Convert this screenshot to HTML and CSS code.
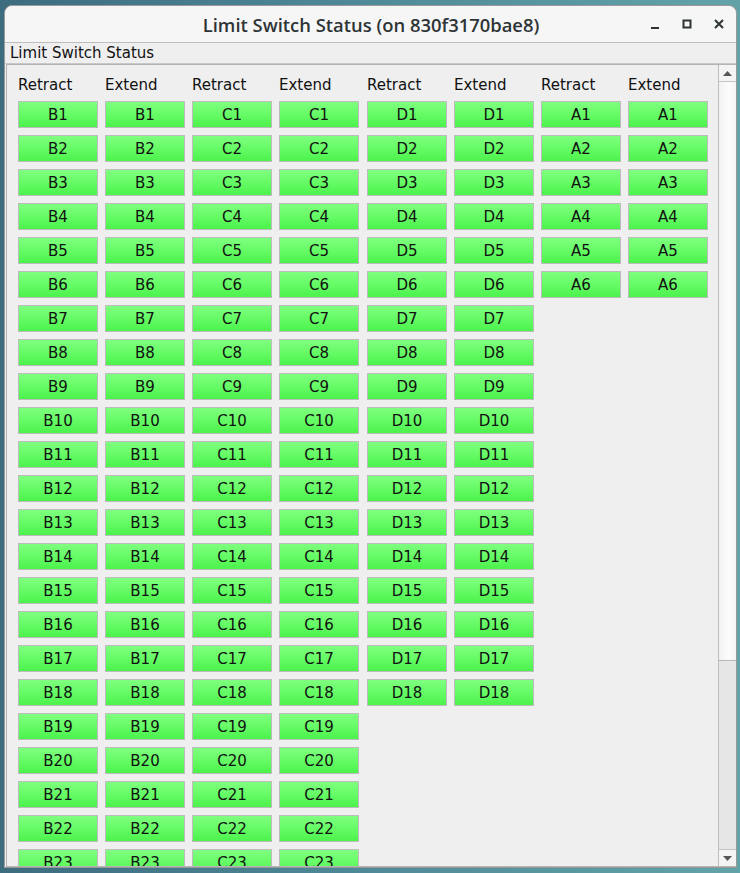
FILE: index.html
```html
<!DOCTYPE html>
<html>
<head>
<meta charset="utf-8">
<link rel="stylesheet" href="styles.css">
</head>
<body>
<div class="window">
  <div class="titlebar">
    <div class="title">Limit Switch Status (on 830f3170bae8)</div>
    <div class="controls">
      <svg class="ctl" width="14" height="14" viewBox="0 0 14 14"><rect x="3" y="10" width="8" height="2" fill="#2e3436"/></svg>
      <svg class="ctl" width="14" height="14" viewBox="0 0 14 14"><rect x="3.5" y="3.5" width="7" height="7" fill="none" stroke="#2e3436" stroke-width="2"/></svg>
      <svg class="ctl" width="14" height="14" viewBox="0 0 14 14"><path d="M3 3 L11 11 M11 3 L3 11" stroke="#2e3436" stroke-width="2"/></svg>
    </div>
  </div>
  <div class="label">Limit Switch Status</div>
  <div class="scrollarea">
    <div class="viewport">
      <div class="cols">
        <div class="col">
          <div class="hdr">Retract</div>
          <div class="btn">B1</div><div class="btn">B2</div><div class="btn">B3</div><div class="btn">B4</div><div class="btn">B5</div><div class="btn">B6</div><div class="btn">B7</div><div class="btn">B8</div><div class="btn">B9</div><div class="btn">B10</div><div class="btn">B11</div><div class="btn">B12</div><div class="btn">B13</div><div class="btn">B14</div><div class="btn">B15</div><div class="btn">B16</div><div class="btn">B17</div><div class="btn">B18</div><div class="btn">B19</div><div class="btn">B20</div><div class="btn">B21</div><div class="btn">B22</div><div class="btn">B23</div>
        </div>
        <div class="col">
          <div class="hdr">Extend</div>
          <div class="btn">B1</div><div class="btn">B2</div><div class="btn">B3</div><div class="btn">B4</div><div class="btn">B5</div><div class="btn">B6</div><div class="btn">B7</div><div class="btn">B8</div><div class="btn">B9</div><div class="btn">B10</div><div class="btn">B11</div><div class="btn">B12</div><div class="btn">B13</div><div class="btn">B14</div><div class="btn">B15</div><div class="btn">B16</div><div class="btn">B17</div><div class="btn">B18</div><div class="btn">B19</div><div class="btn">B20</div><div class="btn">B21</div><div class="btn">B22</div><div class="btn">B23</div>
        </div>
        <div class="col">
          <div class="hdr">Retract</div>
          <div class="btn">C1</div><div class="btn">C2</div><div class="btn">C3</div><div class="btn">C4</div><div class="btn">C5</div><div class="btn">C6</div><div class="btn">C7</div><div class="btn">C8</div><div class="btn">C9</div><div class="btn">C10</div><div class="btn">C11</div><div class="btn">C12</div><div class="btn">C13</div><div class="btn">C14</div><div class="btn">C15</div><div class="btn">C16</div><div class="btn">C17</div><div class="btn">C18</div><div class="btn">C19</div><div class="btn">C20</div><div class="btn">C21</div><div class="btn">C22</div><div class="btn">C23</div>
        </div>
        <div class="col wide">
          <div class="hdr">Extend</div>
          <div class="btn">C1</div><div class="btn">C2</div><div class="btn">C3</div><div class="btn">C4</div><div class="btn">C5</div><div class="btn">C6</div><div class="btn">C7</div><div class="btn">C8</div><div class="btn">C9</div><div class="btn">C10</div><div class="btn">C11</div><div class="btn">C12</div><div class="btn">C13</div><div class="btn">C14</div><div class="btn">C15</div><div class="btn">C16</div><div class="btn">C17</div><div class="btn">C18</div><div class="btn">C19</div><div class="btn">C20</div><div class="btn">C21</div><div class="btn">C22</div><div class="btn">C23</div>
        </div>
        <div class="col">
          <div class="hdr">Retract</div>
          <div class="btn">D1</div><div class="btn">D2</div><div class="btn">D3</div><div class="btn">D4</div><div class="btn">D5</div><div class="btn">D6</div><div class="btn">D7</div><div class="btn">D8</div><div class="btn">D9</div><div class="btn">D10</div><div class="btn">D11</div><div class="btn">D12</div><div class="btn">D13</div><div class="btn">D14</div><div class="btn">D15</div><div class="btn">D16</div><div class="btn">D17</div><div class="btn">D18</div>
        </div>
        <div class="col">
          <div class="hdr">Extend</div>
          <div class="btn">D1</div><div class="btn">D2</div><div class="btn">D3</div><div class="btn">D4</div><div class="btn">D5</div><div class="btn">D6</div><div class="btn">D7</div><div class="btn">D8</div><div class="btn">D9</div><div class="btn">D10</div><div class="btn">D11</div><div class="btn">D12</div><div class="btn">D13</div><div class="btn">D14</div><div class="btn">D15</div><div class="btn">D16</div><div class="btn">D17</div><div class="btn">D18</div>
        </div>
        <div class="col">
          <div class="hdr">Retract</div>
          <div class="btn">A1</div><div class="btn">A2</div><div class="btn">A3</div><div class="btn">A4</div><div class="btn">A5</div><div class="btn">A6</div>
        </div>
        <div class="col">
          <div class="hdr">Extend</div>
          <div class="btn">A1</div><div class="btn">A2</div><div class="btn">A3</div><div class="btn">A4</div><div class="btn">A5</div><div class="btn">A6</div>
        </div>
      </div>
    </div>
    <div class="scrollbar">
      <div class="arrow up"><svg width="9" height="5" viewBox="0 0 9 5"><path d="M0 5 L4.5 0 L9 5 Z" fill="#555"/></svg></div>
      <div class="thumb"></div>
      <div class="track"></div>
      <div class="arrow down"><svg width="9" height="5" viewBox="0 0 9 5"><path d="M0 0 L9 0 L4.5 5 Z" fill="#555"/></svg></div>
    </div>
  </div>
</div>
</body>
</html>
```

FILE: styles.css
```css
html, body {
  margin: 0;
  padding: 0;
}
body {
  width: 740px;
  height: 873px;
  overflow: hidden;
  background: linear-gradient(to right, #3d6c7e 0%, #4f8a98 50%, #62a3a8 100%);
  padding: 5px 3px 5px 4px;
  box-sizing: border-box;
  font-family: "DejaVu Sans", sans-serif;
}
.window {
  width: 733px;
  height: 863px;
  box-sizing: border-box;
  border: 1px solid #9a9a9a;
  border-radius: 8px 8px 0 0;
  background: #efefef;
  display: flex;
  flex-direction: column;
  overflow: hidden;
}
.titlebar {
  height: 37px;
  flex: none;
  background: #f6f6f6;
  border-bottom: 1px solid #bdbdbd;
  box-sizing: border-box;
  position: relative;
  display: flex;
  align-items: center;
  justify-content: center;
  border-radius: 7px 7px 0 0;
}
.title {
  font-family: "Open Sans", sans-serif;
  font-weight: 600;
  font-size: 18.4px;
  color: #2e3436;
  margin-left: 1px;
  margin-top: 1px;
}
.controls {
  position: absolute;
  right: 10px;
  top: 11px;
  display: flex;
  gap: 18px;
}
.ctl {
  display: block;
}
.label {
  height: 21px;
  flex: none;
  font-size: 15px;
  line-height: 21px;
  color: #111;
  padding-left: 5px;
  border-bottom: 1px solid #c8c8c8;
  box-sizing: border-box;
}
.scrollarea {
  flex: 1;
  margin-left: 1px;
  border: 1px solid #b4b4b4;
  border-right: none;
  display: flex;
  overflow: hidden;
  background: #efefef;
}
.viewport {
  flex: 1;
  overflow: hidden;
  padding: 11px 0 0 11px;
}
.cols {
  display: flex;
  gap: 7px;
  align-items: flex-start;
}
.col {
  display: flex;
  flex-direction: column;
  gap: 7px;
  width: 80px;
}
.col.wide {
  width: 81px;
}
.hdr {
  font-size: 15px;
  line-height: 18px;
  height: 18px;
  color: #111;
  white-space: nowrap;
}
.btn {
  width: 80px;
  height: 27px;
  box-sizing: border-box;
  border: 1px solid #bcbcbc;
  background: linear-gradient(to bottom, #80ff80 0%, #66fb66 50%, #4cf24c 100%);
  font-size: 15px;
  line-height: 27px;
  text-align: center;
  color: #111;
  flex: none;
}
.scrollbar {
  width: 17px;
  flex: none;
  border-left: 1px solid #bdbdbd;
  display: flex;
  flex-direction: column;
  background: #e6e6e6;
}
.arrow {
  height: 16px;
  flex: none;
  background: #f4f4f4;
  display: flex;
  align-items: center;
  justify-content: center;
}
.arrow.up {
  border-bottom: 1px solid #c4c4c4;
}
.arrow.down {
  border-top: 1px solid #c4c4c4;
}
.thumb {
  height: 578px;
  flex: none;
  background: linear-gradient(to right, #f2f2f2, #fcfcfc 60%, #f4f4f4);
  border-bottom: 1px solid #b8b8b8;
}
.track {
  flex: 1;
  background: #e6e6e6;
}
```
